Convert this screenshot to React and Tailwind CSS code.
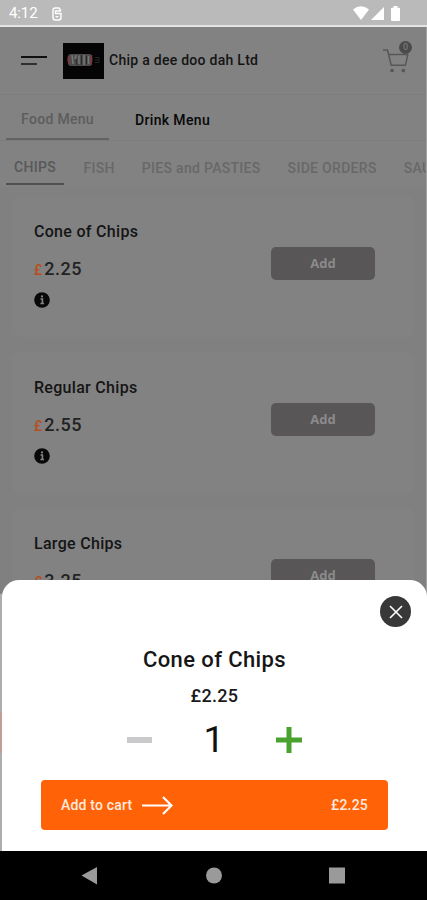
const categories = ["CHIPS", "FISH", "PIES and PASTIES", "SIDE ORDERS", "SAUSAGES"];

const products = [
  { name: "Cone of Chips", price: "2.25" },
  { name: "Regular Chips", price: "2.55" },
  { name: "Large Chips", price: "3.25" },
];

const StatusBar = () => (
  <div className="h-[27px] shrink-0 flex items-center justify-between bg-[#bababa] border-b-2 border-[#e4e4e4] pl-[9px] pr-[27px] text-white">
    <div className="flex items-center gap-[14px] pt-[2px]">
      <span className="text-[15px] leading-none tracking-[-0.1px]">4:12</span>
      <svg width="10" height="14" viewBox="0 0 10 14" fill="none" stroke="currentColor" strokeWidth="1.4">
        <path d="M9 3.8L7 1H3.2Q1 1 1 3.2V10.5Q1 13 3.5 13H6.5Q9 13 9 10.5V6.5H3.5V4H9" />
        <path d="M3.5 9.7H6.5" />
      </svg>
    </div>
    <div className="flex items-center pt-[1px]">
      <svg width="16" height="14" viewBox="0 0 16 14" fill="currentColor">
        <path d="M0 3.5Q8-3 16 3.5L8 14Z" />
      </svg>
      <svg width="13" height="13" viewBox="0 0 13 13" fill="currentColor" className="ml-[2px]">
        <path d="M13 0V13H0Z" />
      </svg>
      <svg width="9" height="15" viewBox="0 0 9 15" fill="currentColor" className="ml-[7px]">
        <path d="M2.5 0H6.5V1.7H8Q9 1.7 9 2.7V14Q9 15 8 15H1Q0 15 0 14V2.7Q0 1.7 1 1.7H2.5Z" />
      </svg>
    </div>
  </div>
);

const Header = () => (
  <header className="h-[68px] shrink-0 flex items-center border-b border-[#7c7c7c] pl-[21px] pr-[14px]">
    <div className="flex flex-col gap-[5px]">
      <span className="w-[26px] h-[2px] bg-[#101010]" />
      <span className="w-4 h-[2px] bg-[#303030]" />
    </div>
    {/* shop logo */}
    <svg width="41" height="36" viewBox="0 0 41 36" className="ml-4">
      <rect width="41" height="36" fill="#050505" />
      <rect x="5" y="11" width="24" height="12" rx="3" fill="#4c4c4c" />
      <path d="M5.5 13Q4 17 6 21M28.5 12Q29.5 17 28 22" stroke="#8b3036" strokeWidth="1.3" fill="none" />
      <path d="M9 12L10 21M13 12L12 16M16 12.5V21M21 12V22M25.5 13V21" stroke="#777" strokeWidth="1.5" />
      <path d="M13 16L14 22M18.5 12V22M23.5 13V21" stroke="#292929" strokeWidth="1" />
      <path d="M32 14.5H36V19.5H32M32 17H35" stroke="#272727" strokeWidth="1" fill="none" />
    </svg>
    <h1 className="ml-[5px] text-[14px] font-medium tracking-[0.27px] text-[#141414]">
      Chip a dee doo dah Ltd
    </h1>
    <div className="relative ml-auto -mt-[7px] w-[30px] h-[32px]">
      <svg width="30" height="32" viewBox="0 0 30 32" fill="none" stroke="#575757" strokeWidth="1.5" className="block">
        <path d="M1 9H5.5L9.2 24.2H23.5L25.8 13.5H6.6" strokeLinejoin="round" />
        <circle cx="10" cy="29.5" r="1.1" fill="#575757" />
        <circle cx="21.3" cy="29.5" r="1.1" fill="#575757" />
      </svg>
      <span className="absolute right-0 top-0 w-[13px] h-[13px] rounded-full bg-[#4b4b4b] text-[#777] text-[9px] font-medium leading-[13px] text-center">
        0
      </span>
    </div>
  </header>
);

const MenuTabs = () => (
  <div className="h-[46px] shrink-0 flex items-end pl-[6px] border-b border-[#7c7c7c]">
    <div className="w-[103px] h-[45px] border-b-2 border-[#626262] text-center text-[14px] leading-[48px] font-medium tracking-[0.3px] text-[#5d5d5d]">
      Food Menu
    </div>
    <div className="ml-[26px] h-[45px] text-[14px] leading-[50px] font-medium tracking-[0.35px] text-[#080808]">
      Drink Menu
    </div>
  </div>
);

const CategoryTabs = () => (
  <div className="h-[46px] shrink-0 flex items-start pl-[6px] text-[14px] font-medium whitespace-nowrap tracking-[0.3px] text-[#686868]">
    {categories.map((category, idx) => (
      <div
        key={category}
        className={
          idx === 0
            ? "w-[58px] mr-[6px] h-[44px] shrink-0 text-center leading-[53px] border-b-2 border-[#505050] text-[#585858]"
            : "px-[13.5px] shrink-0 leading-[55px]"
        }
      >
        {category}
      </div>
    ))}
  </div>
);

const ProductCard = ({ name, price }) => (
  <div className="h-[141px] shrink-0 flex justify-between rounded-lg bg-[#828282] pl-[22px] pr-[39px]">
    <div className="pt-[26px]">
      <h2 className="text-[16px] leading-5 font-medium tracking-[0.3px] text-[#151515]">{name}</h2>
      <p className="mt-4 text-[18px] leading-[22px] font-medium text-[#222]">
        <span className="mr-[2px] text-[14px] text-[#b94d1c]">£</span>
        <span className="tracking-[0.5px]">{price}</span>
      </p>
      <svg width="16" height="16" viewBox="0 0 16 16" className="mt-[11px]">
        <circle cx="8" cy="8" r="7.8" fill="#090909" />
        <path d="M6.5 7H8.4V11.2M6.4 11.5H10" stroke="#858585" strokeWidth="1.6" fill="none" />
        <circle cx="8" cy="4.4" r="1.1" fill="#858585" />
      </svg>
    </div>
    <button className="mt-[51px] w-[104px] h-[33px] rounded-[5px] bg-[#595657] font-['Open_Sans',sans-serif] text-[13px] font-bold text-[#8b8b8b]">
      Add
    </button>
  </div>
);

const CartSheet = () => (
  <div className="absolute left-[2px] right-0 top-[580px] h-[271px] rounded-t-[17px] bg-white flex flex-col items-center">
    <button
      aria-label="Close"
      className="absolute right-[16px] top-4 w-[31px] h-[31px] rounded-full bg-[#383838] flex items-center justify-center"
    >
      <svg width="14" height="14" viewBox="0 0 14 14" stroke="#fff" strokeWidth="1.6">
        <path d="M1 1L13 13M13 1L1 13" />
      </svg>
    </button>
    <h2 className="mt-[66px] text-[22px] leading-7 font-medium tracking-[0.4px] text-[#161616]">
      Cone of Chips
    </h2>
    <p className="mt-[10px] text-[18px] leading-6 font-medium tracking-[0.3px] text-[#1a1a1a]">£2.25</p>
    <div className="mt-[10px] h-[44px] w-[175px] flex items-center justify-between">
      <span className="w-[25px] h-[6px] bg-[#cacacd]" />
      <span className="text-[37px] leading-[44px] font-normal text-[#111]">1</span>
      <svg width="26" height="26" viewBox="0 0 26 26" stroke="#4aa22e" strokeWidth="5">
        <path d="M0 13H26M13 0V26" />
      </svg>
    </div>
    <button className="mt-[18px] w-[347px] h-[50px] rounded-[4px] bg-[#ff6207] flex items-center px-5 text-[14px] font-medium tracking-[0.2px] text-[#ffeadf]">
      Add to cart
      <svg width="31" height="19" viewBox="0 0 31 19" fill="none" stroke="#fff" strokeWidth="2.2" className="ml-[10px]">
        <path d="M0 9.5H29.5M21 1L29.5 9.5L21 18" />
      </svg>
      <span className="ml-auto">£2.25</span>
    </button>
  </div>
);

const NavigationBar = () => (
  <nav className="h-[49px] shrink-0 bg-black text-[#9a9a9a]">
    <svg width="427" height="49" viewBox="0 0 427 49" fill="currentColor">
      <path d="M81.5 24.5L97 16V33.5Z" />
      <circle cx="214" cy="24.5" r="8" />
      <rect x="329" y="16.5" width="16" height="16" />
    </svg>
  </nav>
);

const App = () => {
  return (
    <div className="relative w-[427px] h-[900px] overflow-hidden flex flex-col bg-[#828282] font-[Roboto,sans-serif]">
      <StatusBar />
      <main className="flex-1 min-h-0 overflow-hidden flex flex-col border-r border-[#a2a2a2]">
        <Header />
        <MenuTabs />
        <CategoryTabs />
        <div className="pt-[9px] px-3 flex flex-col gap-[15px] flex-1 min-h-0 overflow-hidden bg-[#808080]">
          {products.map((product) => (
            <ProductCard key={product.name} {...product} />
          ))}
        </div>
      </main>
      {/* page edge beside the sheet */}
      <div className="absolute left-0 top-[594px] w-[2px] h-[257px] bg-[#adadb0] flex flex-col">
        <span className="mt-[118px] h-[41px] bg-[#c09d99]" />
      </div>
      <CartSheet />
      <NavigationBar />
    </div>
  );
};

export default App;
